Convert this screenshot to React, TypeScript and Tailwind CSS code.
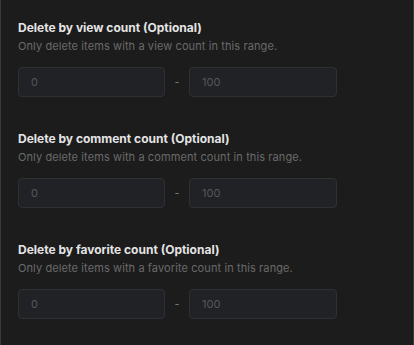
const sections = [
  { title: "Delete by view count (Optional)", desc: "Only delete items with a view count in this range." },
  { title: "Delete by comment count (Optional)", desc: "Only delete items with a comment count in this range." },
  { title: "Delete by favorite count (Optional)", desc: "Only delete items with a favorite count in this range." },
];

function RangeField({ title, desc }: { title: string; desc: string }) {
  return (
    <div className="flex flex-col">
      <h3 className="text-[12px] leading-4 font-bold text-[#e4e4e4]">{title}</h3>
      <p className="text-[11px] leading-4 mt-[2px] text-[#6a6a6a] tracking-[0.1px]">{desc}</p>
      <div className="flex items-center mt-[13px]">
        <input
          placeholder="0"
          className="w-[147px] h-[30px] rounded-[4px] bg-[#212226] border border-[#2f3034] px-[12px] text-[11px] text-[#bbb] placeholder:text-[#55565a] outline-none"
        />
        <span className="w-[24px] text-center text-[11px] text-[#77787c]">-</span>
        <input
          placeholder="100"
          className="w-[148px] h-[30px] rounded-[4px] bg-[#212226] border border-[#2f3034] px-[12px] text-[11px] text-[#bbb] placeholder:text-[#55565a] outline-none"
        />
      </div>
    </div>
  );
}

export default function App() {
  return (
    <div
      className="w-[414px] h-[345px] bg-[#1c1c1c] border-l border-r border-[#3a3a3a] px-[17px] pt-[20px] flex flex-col gap-[34px] overflow-hidden"
      style={{ fontFamily: "Inter, 'Noto Sans', sans-serif" }}
    >
      {sections.map((s) => (
        <RangeField key={s.title} title={s.title} desc={s.desc} />
      ))}
    </div>
  );
}
